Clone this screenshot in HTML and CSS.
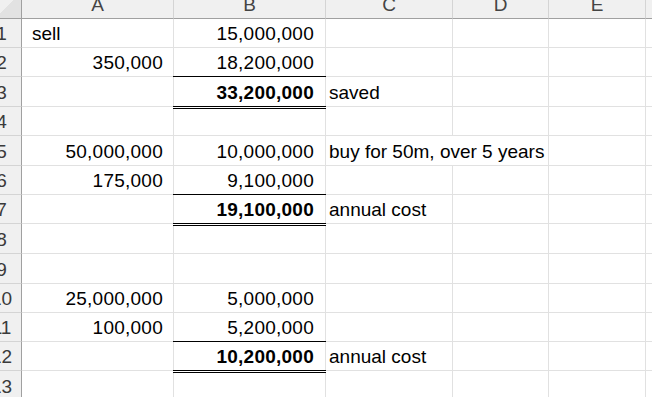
FILE: index.html
```html
<!DOCTYPE html>
<html>
<head>
<meta charset="utf-8">
<link rel="stylesheet" href="styles.css">
</head>
<body>
<div class="sheet">
  <div class="c corner"></div>
  <div class="c hd">A</div><div class="c hd">B</div><div class="c hd">C</div><div class="c hd">D</div><div class="c hd">E</div><div class="c hd">F</div>

  <div class="c rh">1</div>
  <div class="c txt indent">sell</div><div class="c num nb">15,000,000</div><div class="c"></div><div class="c"></div><div class="c"></div><div class="c"></div>

  <div class="c rh">2</div>
  <div class="c num na">350,000</div><div class="c num nb sum-top">18,200,000</div><div class="c"></div><div class="c"></div><div class="c"></div><div class="c"></div>

  <div class="c rh">3</div>
  <div class="c"></div><div class="c num nb bold sum-total">33,200,000</div><div class="c txt">saved</div><div class="c"></div><div class="c"></div><div class="c"></div>

  <div class="c rh">4</div>
  <div class="c"></div><div class="c"></div><div class="c"></div><div class="c"></div><div class="c"></div><div class="c"></div>

  <div class="c rh">5</div>
  <div class="c num na">50,000,000</div><div class="c num nb">10,000,000</div><div class="c txt span2">buy for 50m, over 5 years</div><div class="c"></div><div class="c"></div>

  <div class="c rh">6</div>
  <div class="c num na">175,000</div><div class="c num nb sum-top">9,100,000</div><div class="c"></div><div class="c"></div><div class="c"></div><div class="c"></div>

  <div class="c rh">7</div>
  <div class="c"></div><div class="c num nb bold sum-total">19,100,000</div><div class="c txt">annual cost</div><div class="c"></div><div class="c"></div><div class="c"></div>

  <div class="c rh">8</div>
  <div class="c"></div><div class="c"></div><div class="c"></div><div class="c"></div><div class="c"></div><div class="c"></div>

  <div class="c rh">9</div>
  <div class="c"></div><div class="c"></div><div class="c"></div><div class="c"></div><div class="c"></div><div class="c"></div>

  <div class="c rh">10</div>
  <div class="c num na">25,000,000</div><div class="c num nb">5,000,000</div><div class="c"></div><div class="c"></div><div class="c"></div><div class="c"></div>

  <div class="c rh">11</div>
  <div class="c num na">100,000</div><div class="c num nb sum-top">5,200,000</div><div class="c"></div><div class="c"></div><div class="c"></div><div class="c"></div>

  <div class="c rh">12</div>
  <div class="c"></div><div class="c num nb bold sum-total">10,200,000</div><div class="c txt">annual cost</div><div class="c"></div><div class="c"></div><div class="c"></div>

  <div class="c rh">13</div>
  <div class="c"></div><div class="c"></div><div class="c"></div><div class="c"></div><div class="c"></div><div class="c"></div>
</div>
</body>
</html>
```

FILE: styles.css
```css
html, body {
  margin: 0;
  padding: 0;
  background: #ffffff;
  overflow: hidden;
}

.sheet {
  display: grid;
  grid-template-columns: 40px 152px 152px 127px 96px 97px 110px;
  grid-template-rows: 19px 29px 29px 30px 29px 30px 29px 29px 30px 30px 29px 29px 29px 30px;
  margin-left: -18px;
  font-family: "Liberation Sans", Arial, sans-serif;
  font-size: 19px;
  color: #000000;
}

.c {
  box-sizing: border-box;
  border-right: 1px solid #e1e1e1;
  border-bottom: 1px solid #e1e1e1;
  display: flex;
  align-items: flex-end;
  line-height: 20px;
  padding: 0 3px 3px 3px;
  white-space: nowrap;
  min-width: 0;
}

.corner {
  background: linear-gradient(135deg, #f0f0f0 55%, #e2e2e2 55%);
  border-right-color: #a0a0a0;
  border-bottom-color: #a0a0a0;
}

.hd {
  background: #f0f0f0;
  color: #444444;
  justify-content: center;
  border-bottom-color: #a0a0a0;
  border-right-color: #d4d4d4;
}

.rh {
  background: #f0f0f0;
  color: #3a3a3a;
  justify-content: center;
  padding-left: 3px;
  padding-right: 3px;
  border-right-color: #a0a0a0;
  border-bottom-color: #d4d4d4;
}

.num {
  justify-content: flex-end;
  letter-spacing: 0.25px;
}

.na {
  padding-right: 10px;
}

.nb {
  padding-right: 11px;
}

.indent {
  padding-left: 10px;
}

.bold {
  font-weight: bold;
}

.span2 {
  grid-column: span 2;
}

.sum-top {
  position: relative;
}

.sum-top::after {
  content: "";
  position: absolute;
  left: -1px;
  right: -1px;
  bottom: -1px;
  height: 1px;
  background: #000000;
}

.sum-total {
  position: relative;
}

.sum-total::after {
  content: "";
  position: absolute;
  left: -1px;
  right: -1px;
  bottom: -3px;
  height: 1px;
  border-top: 1px solid #000000;
  border-bottom: 1px solid #000000;
  background: #ffffff;
}
```
